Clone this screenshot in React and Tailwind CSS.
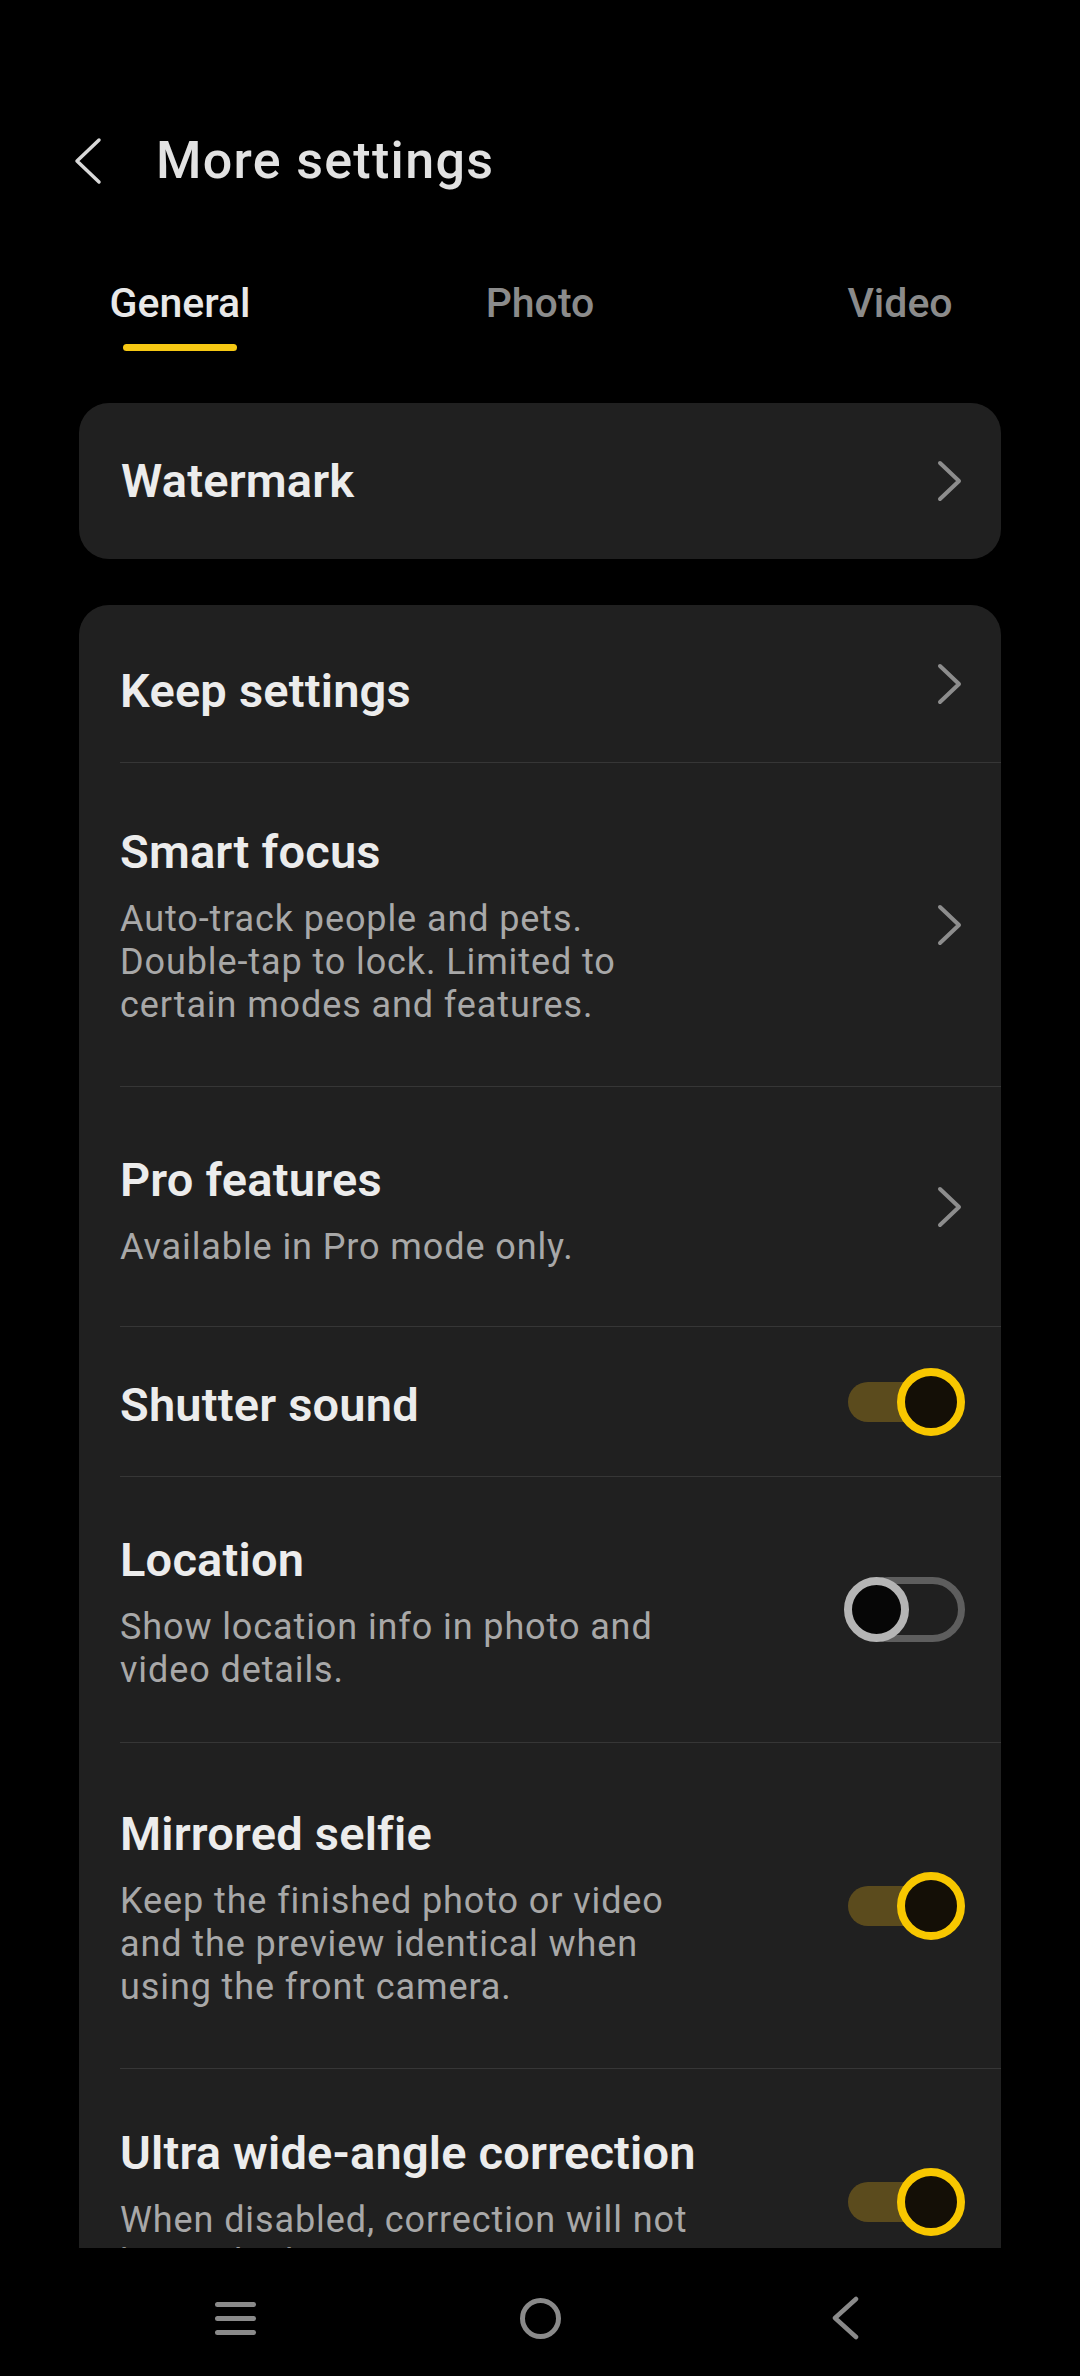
import React from 'react';

function Chevron() {
  return (
    <svg width="32" height="48" viewBox="0 0 32 48" className="shrink-0">
      <path d="M7 6 L26 24 L7 42" fill="none" stroke="#8d8d8d" strokeWidth="4" strokeLinecap="round" strokeLinejoin="round" />
    </svg>
  );
}

function Toggle({ on }) {
  if (on) {
    return (
      <div className="relative w-[117px] h-[68px] shrink-0">
        <div className="absolute left-0 top-[14px] h-[40px] w-[90px] rounded-full bg-[#5b4b1d]" />
        <div className="absolute right-0 top-0 w-[68px] h-[68px] rounded-full border-[8px] border-[#f8c700] bg-[#140f06]" />
      </div>
    );
  }
  return (
    <div className="relative w-[121px] h-[65px] shrink-0">
      <div className="absolute left-[12px] right-0 top-0 bottom-0 rounded-full border-[7px] border-[#5e5e5e]" />
      <div className="absolute left-0 top-0 w-[65px] h-[65px] rounded-full border-[8px] border-[#b5b5b5] bg-[#060606]" />
    </div>
  );
}

const rows = [
  { title: 'Keep settings', pad: 'pt-[58px] pb-[43px]', control: 'chevron' },
  {
    title: 'Smart focus',
    desc: ['Auto-track people and pets.', 'Double-tap to lock. Limited to', 'certain modes and features.'],
    pad: 'pt-[61px] pb-[59px]',
    control: 'chevron',
  },
  { title: 'Pro features', desc: ['Available in Pro mode only.'], pad: 'pt-[65px] pb-[57px]', control: 'chevron' },
  { title: 'Shutter sound', pad: 'pt-[50px] pb-[43px]', control: 'on' },
  {
    title: 'Location',
    desc: ['Show location info in photo and', 'video details.'],
    pad: 'pt-[55px] pb-[50px]',
    control: 'off',
  },
  {
    title: 'Mirrored selfie',
    desc: ['Keep the finished photo or video', 'and the preview identical when', 'using the front camera.'],
    pad: 'pt-[63px] pb-[59px]',
    control: 'on',
  },
  {
    title: 'Ultra wide-angle correction',
    desc: ['When disabled, correction will not', 'be applied.'],
    pad: 'pt-[56px] pb-[50px]',
    control: 'on',
  },
];

function Row({ row, first }) {
  return (
    <div className={`ml-[41px] flex items-center justify-between pr-[36px] ${first ? '' : 'border-t border-[#363636]'}`}>
      <div className={row.pad}>
        <div className="text-[47px] leading-[56px] tracking-[0.2px] font-semibold text-[#ececec] whitespace-nowrap">
          {row.title}
        </div>
        {row.desc && (
          <div className="mt-[18px] text-[36px] leading-[43px] tracking-[0.9px] text-[#a8a8a8]">
            {row.desc.map((line) => (
              <div key={line} className="whitespace-nowrap">
                {line}
              </div>
            ))}
          </div>
        )}
      </div>
      {row.control === 'chevron' && <Chevron />}
      {row.control === 'on' && <Toggle on />}
      {row.control === 'off' && <Toggle on={false} />}
    </div>
  );
}

export default function App() {
  return (
    <div className="w-[1080px] h-[2376px] bg-black font-[family-name:Roboto,sans-serif] flex flex-col overflow-hidden">
      <div className="h-[2248px] overflow-hidden">
        {/* Header */}
        <div className="flex items-center pt-[131px] pl-[72px]">
          <svg width="32" height="48" viewBox="0 0 32 48">
            <path d="M27 3 L5 24 L27 45" fill="none" stroke="#d9d9d9" strokeWidth="3.5" strokeLinecap="round" strokeLinejoin="round" />
          </svg>
          <h1 className="ml-[52px] text-[52px] leading-[60px] tracking-[1.3px] font-medium text-[#e2e2e2]">More settings</h1>
        </div>

        {/* Tabs */}
        <div className="grid grid-cols-3 mt-[87px]">
          <div className="flex flex-col items-center">
            <span className="text-[41px] leading-[50px] font-medium text-[#e8e8e8]">General</span>
            <div className="mt-[16px] h-[7px] w-[114px] rounded-full bg-[#f6c813]" />
          </div>
          <div className="flex flex-col items-center">
            <span className="text-[41px] leading-[50px] font-medium text-[#8b8b8b]">Photo</span>
          </div>
          <div className="flex flex-col items-center">
            <span className="text-[41px] leading-[50px] font-medium text-[#8b8b8b]">Video</span>
          </div>
        </div>

        {/* Watermark */}
        <div className="mx-[79px] mt-[52px] h-[156px] rounded-[30px] bg-[#202020] flex items-center justify-between pl-[42px] pr-[36px]">
          <span className="text-[47px] tracking-[0.2px] font-semibold text-[#ececec]">Watermark</span>
          <Chevron />
        </div>

        {/* Settings list */}
        <div className="mx-[79px] mt-[46px] rounded-[30px] bg-[#202020]">
          {rows.map((row, i) => (
            <Row key={row.title} row={row} first={i === 0} />
          ))}
        </div>
      </div>

      {/* Navigation bar */}
      <div className="flex-1 grid grid-cols-[305px_305px_305px] justify-center items-center pt-[12px]">
        <div className="flex justify-center">
          <div className="flex flex-col gap-[9px]">
            <div className="w-[41px] h-[5px] rounded-full bg-[#8a8a8a]" />
            <div className="w-[41px] h-[5px] rounded-full bg-[#8a8a8a]" />
            <div className="w-[41px] h-[5px] rounded-full bg-[#8a8a8a]" />
          </div>
        </div>
        <div className="flex justify-center">
          <div className="w-[41px] h-[41px] rounded-full border-[5px] border-[#8a8a8a]" />
        </div>
        <div className="flex justify-center">
          <svg width="30" height="44" viewBox="0 0 30 44">
            <path d="M26 3 L5 22 L26 41" fill="none" stroke="#8a8a8a" strokeWidth="4.5" strokeLinecap="round" strokeLinejoin="round" />
          </svg>
        </div>
      </div>
    </div>
  );
}
